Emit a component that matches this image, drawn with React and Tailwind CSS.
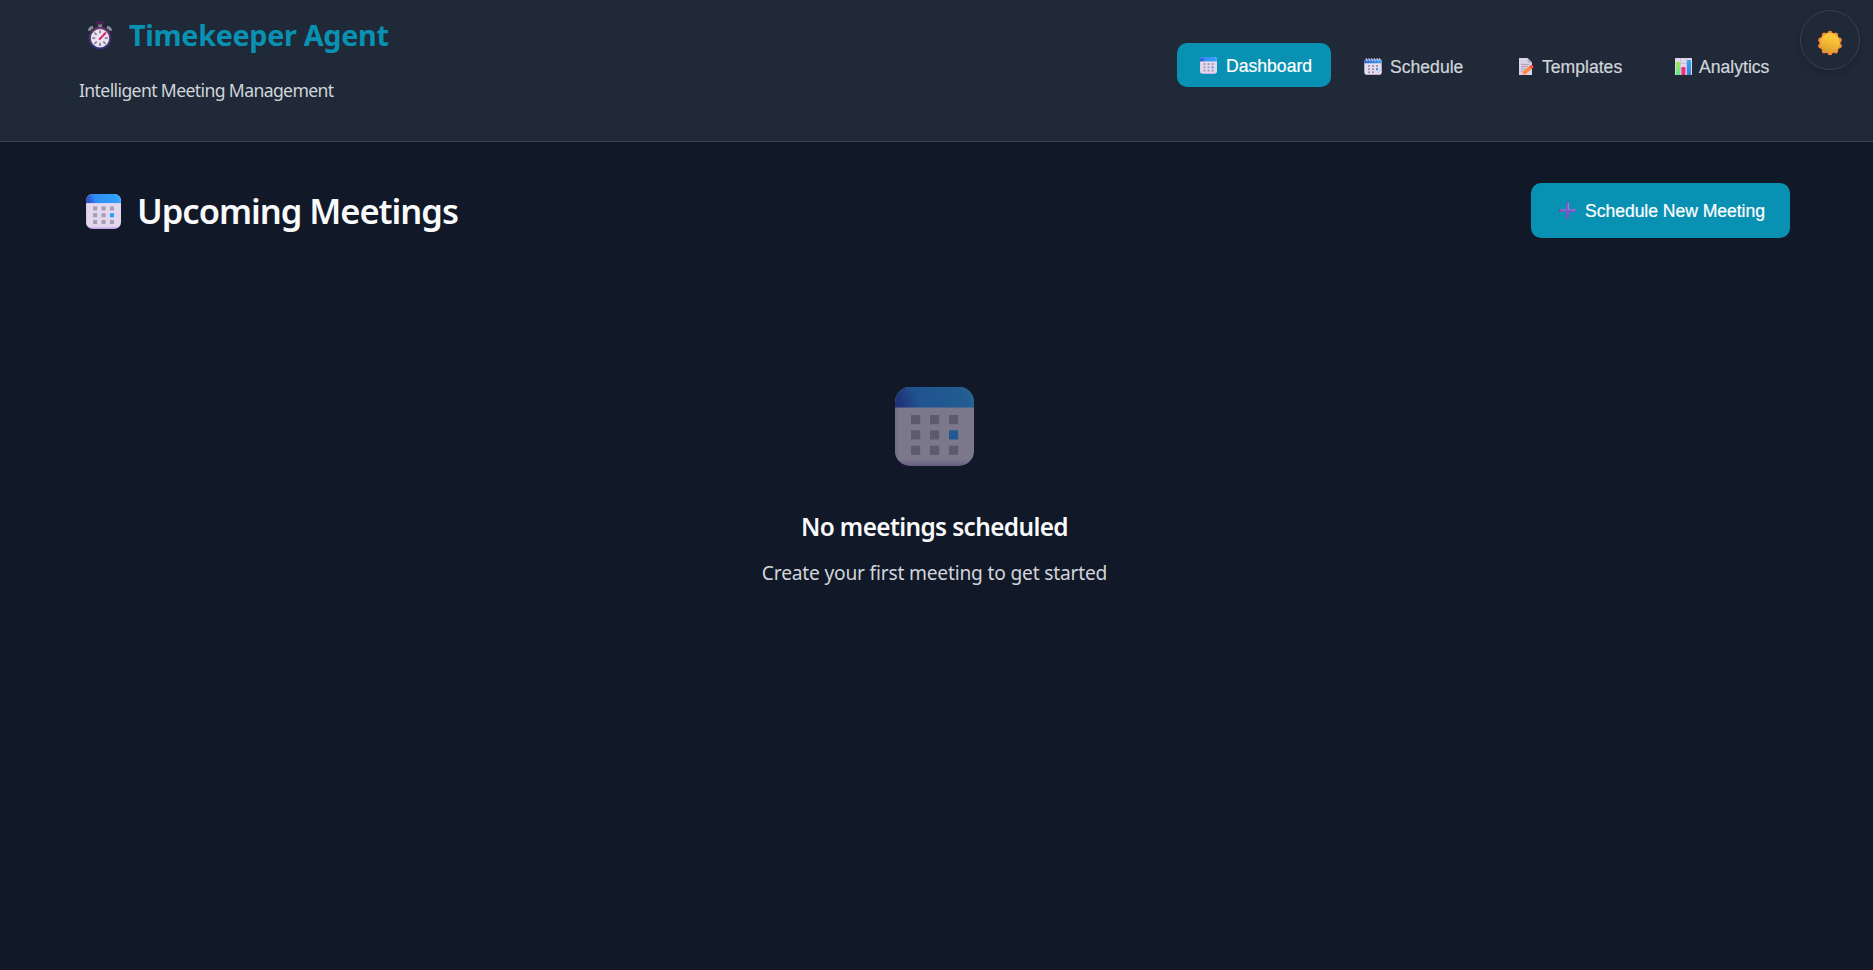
import React from "react";

const DOT_COLS = [16, 35, 54];
const DOT_ROWS = [28, 43.3, 58.7];

function CalendarIcon({ id, className }) {
  return (
    <svg viewBox="0 0 79 79" className={className} aria-hidden="true">
      <defs>
        <linearGradient id={`${id}-top`} x1="0" y1="0.1" x2="1" y2="0">
          <stop offset="0" stopColor="#3050cc" />
          <stop offset="0.24" stopColor="#2f90f5" />
          <stop offset="0.82" stopColor="#2f9ffb" />
          <stop offset="1" stopColor="#3fb8ff" />
        </linearGradient>
        <linearGradient id={`${id}-body`} x1="0" y1="0" x2="0" y2="1">
          <stop offset="0.92" stopColor="#e4d8ee" />
          <stop offset="1" stopColor="#c09ae0" />
        </linearGradient>
        <clipPath id={`${id}-clip`}>
          <rect width="79" height="79" rx="15" />
        </clipPath>
      </defs>
      <g clipPath={`url(#${id}-clip)`}>
        <rect width="79" height="79" fill={`url(#${id}-body)`} />
        <rect width="3" y="20" height="59" fill="#cdbfdb" opacity="0.6" />
        <rect width="79" height="20.5" fill={`url(#${id}-top)`} />
      </g>
      {DOT_ROWS.map((y, r) =>
        DOT_COLS.map((x, c) => (
          <rect key={`${r}-${c}`} x={x} y={y} width="9.2" height="9.2" fill={r === 1 && c === 2 ? "#2f9cf8" : "#a79eb3"} />
        ))
      )}
    </svg>
  );
}

function SpiralCalendarIcon({ className }) {
  return (
    <svg viewBox="0 0 18 17" className={className} aria-hidden="true">
      <defs>
        <linearGradient id="spiral-top" x1="0" x2="1">
          <stop offset="0" stopColor="#2b5fd0" />
          <stop offset="1" stopColor="#3aa2f5" />
        </linearGradient>
      </defs>
      <path d="M0.3 3.5a2.2 2.2 0 0 1 2.2-2.2h13a2.2 2.2 0 0 1 2.2 2.2v9.7l-3.7 3.6H2.5a2.2 2.2 0 0 1-2.2-2.2z" fill="#e6dcf0" />
      <path d="M0.3 5.2V3.5a2.2 2.2 0 0 1 2.2-2.2h13a2.2 2.2 0 0 1 2.2 2.2v1.7z" fill="url(#spiral-top)" />
      <path d="M2 0.2l1.4 3M4.7 0.2l1.4 3M7.4 0.2l1.4 3M10.1 0.2l1.4 3M12.8 0.2l1.4 3M15.2 0.2l1.2 2.6" stroke="#cfc9d9" strokeWidth="1.1" fill="none" />
      <path d="M17.7 12.5l-3.9 4.3h1.7a2.2 2.2 0 0 0 2.2-2.2z" fill="#f7f2fb" />
      <path d="M17.5 12.6q-3.4-0.1-3.6 4" stroke="#bfb3cb" strokeWidth="0.7" fill="none" />
      <g fill="#9a91a6">
        <rect x="4" y="7.2" width="2" height="1.7" /><rect x="8" y="7.2" width="2" height="1.7" /><rect x="12" y="7.2" width="2" height="1.7" />
        <rect x="4" y="10.3" width="2" height="1.7" /><rect x="8" y="10.3" width="2" height="1.7" />
        <rect x="4" y="13.4" width="2" height="1.7" /><rect x="8" y="13.4" width="2" height="1.7" />
      </g>
      <rect x="12" y="10.2" width="2" height="2" fill="#2492f0" />
    </svg>
  );
}

function MemoIcon({ className }) {
  return (
    <svg viewBox="0 0 17 17" className={className} aria-hidden="true">
      <path d="M1 0h8.6l4.4 4.4V17H1z" fill="#ddd3e8" />
      <path d="M9.6 0v3.4a1 1 0 0 0 1 1H14z" fill="#b5a9c2" />
      <path d="M3 6.4h8M3 8.6h7M3 10.8h4.5M3 13h2" stroke="#a095ad" strokeWidth="0.9" />
      <path d="M4.2 16.6l0.8-3.3 7-5.6 2.4 2.6-6.8 5.9z" fill="#ff8a3d" />
      <path d="M11.2 8.3l1.9-1.5c.8-.6 3 1.8 2.2 2.6l-1.9 1.6z" fill="#ff4d4f" />
      <path d="M4.2 16.6l0.5-2 1.6 1.6z" fill="#e9c49a" />
    </svg>
  );
}

function ChartIcon({ className }) {
  return (
    <svg viewBox="0 0 17 17" className={className} aria-hidden="true">
      <defs>
        <linearGradient id="bar-green" x1="0" y1="0" x2="0" y2="1">
          <stop offset="0" stopColor="#a2e357" /><stop offset="1" stopColor="#62e58e" />
        </linearGradient>
        <linearGradient id="bar-blue" x1="0" y1="0" x2="0" y2="1">
          <stop offset="0" stopColor="#2fa8f7" /><stop offset="1" stopColor="#3a7fd6" />
        </linearGradient>
      </defs>
      <rect width="17" height="17" rx="0.6" fill="#e0d8ea" />
      <path d="M5.6 0v17M11.3 0v17M0 5.5h17M0 11h17" stroke="#bdb2c8" strokeWidth="0.6" />
      <path d="M1 17V4.8a.8.8 0 0 1 .8-.8h2.4a.8.8 0 0 1 .8.8V17z" fill="url(#bar-green)" />
      <path d="M6.4 17V9.8a.8.8 0 0 1 .8-.8h2.4a.8.8 0 0 1 .8.8V17z" fill="#e8327c" />
      <path d="M12 17V2.8a.8.8 0 0 1 .8-.8h2.4a.8.8 0 0 1 .8.8V17z" fill="url(#bar-blue)" />
    </svg>
  );
}

const TICKS = [0, 45, 90, 135, 180, 225, 270, 315];

function StopwatchIcon({ className }) {
  return (
    <svg viewBox="0 0 24 30" className={className} aria-hidden="true">
      <defs>
        <linearGradient id="watch-ring" x1="0" y1="0" x2="0" y2="1">
          <stop offset="0" stopColor="#6a3a72" />
          <stop offset="0.5" stopColor="#4a2f66" />
          <stop offset="1" stopColor="#2f3278" />
        </linearGradient>
      </defs>
      <path d="M1.4 10.8C1.4 8.8 3 7.3 5 7.3M22.6 10.8C22.6 8.8 21 7.3 19 7.3" stroke="#918d99" strokeWidth="2.8" fill="none" />
      <rect x="10.2" y="4" width="3.8" height="3.4" fill="#85818f" />
      <rect x="7.9" y="1" width="8.4" height="3.6" rx="0.6" fill="#46204f" />
      <circle cx="12" cy="18.2" r="11.3" fill="url(#watch-ring)" />
      <circle cx="12" cy="18.2" r="9.2" fill="#eae2f1" />
      {TICKS.map((a) => (
        <rect key={a} x="11.1" y="10.2" width="1.8" height="3.4" rx="0.8" fill="#8b8494" transform={`rotate(${a} 12 18.2)`} />
      ))}
      <path d="M11.7 19l5.8-5.8" stroke="#e31b68" strokeWidth="1.8" strokeLinecap="round" />
    </svg>
  );
}

function PlusIcon({ className }) {
  return (
    <svg viewBox="0 0 17 17" className={className} aria-hidden="true">
      <defs>
        <linearGradient id="plus-h" x1="0" y1="0" x2="0" y2="1">
          <stop offset="0" stopColor="#8f74bd" /><stop offset="1" stopColor="#7450cf" />
        </linearGradient>
      </defs>
      <rect x="0" y="7.1" width="17" height="2.9" rx="0.8" fill="url(#plus-h)" />
      <rect x="7.1" y="0" width="3" height="17" rx="0.8" fill="#7d57c8" />
      <rect x="0" y="7.4" width="1.2" height="2.2" fill="#5a4a7a" />
      <rect x="8.8" y="1" width="1" height="7" fill="#a68bd4" />
    </svg>
  );
}

const PETALS = [0, 36, 72, 108, 144, 180, 216, 252, 288, 324];

function SunIcon({ className }) {
  return (
    <svg viewBox="0 0 26 26" className={className} aria-hidden="true">
      <defs>
        <linearGradient id="sun-core" x1="0.7" y1="0" x2="0.3" y2="1">
          <stop offset="0" stopColor="#ffd038" />
          <stop offset="0.5" stopColor="#f4b935" />
          <stop offset="1" stopColor="#d59a2c" />
        </linearGradient>
      </defs>
      {PETALS.map((a) => (
        <circle key={a} cx="13" cy="3.1" r="2.4" fill="#f58a35" transform={`rotate(${a} 13 13)`} />
      ))}
      <circle cx="13" cy="13" r="10.6" fill="#f58a35" />
      <circle cx="13" cy="13" r="9.9" fill="url(#sun-core)" />
    </svg>
  );
}

function NavItem({ active, icon, label, className }) {
  return (
    <button
      className={`flex h-11 items-center rounded-[10px] text-left text-[17.6px] leading-5 [-webkit-text-stroke:0.2px] ${
        active ? "-mt-0.5 bg-[#0891b2] text-white" : "text-[#d1d5db]"
      } ${className}`}
    >
      {icon}
      <span className="whitespace-nowrap pt-0.5">{label}</span>
    </button>
  );
}

export default function App() {
  return (
    <div className="h-[970px] w-full overflow-hidden bg-[#111827] font-['Noto_Sans','Open_Sans',sans-serif] text-[#f9fafb]">
      <header className="flex h-[142px] items-start justify-between border-b border-[#374151] bg-[#1f2937] pl-[79px] pr-[82px]">
        <div className="pt-[15px]">
          <h1 className="flex h-10 items-center pl-[9px] text-[28.8px] font-bold leading-10 text-[#0891b2]">
            <StopwatchIcon className="mr-[17px] h-[30px] w-6 shrink-0" />
            <span className="whitespace-nowrap tracking-[-0.34px]">Timekeeper Agent</span>
          </h1>
          <p className="mt-[21px] whitespace-nowrap text-[17.6px] leading-7 tracking-[-0.62px] text-[#d1d5db]">
            Intelligent Meeting Management
          </p>
        </div>
        <nav className="flex items-center gap-[10px] pt-[44px] font-['Liberation_Sans',Arial,sans-serif]">
          <NavItem active label="Dashboard" className="w-[154px] pl-[23px]" icon={<CalendarIcon id="nav" className="mr-[9px] size-[17px] shrink-0" />} />
          <NavItem label="Schedule" className="w-[144px] pl-[23px]" icon={<SpiralCalendarIcon className="mr-2 h-[17px] w-[18px] shrink-0" />} />
          <NavItem label="Templates" className="w-[148px] pl-[23px]" icon={<MemoIcon className="mr-[7px] size-[17px] shrink-0" />} />
          <NavItem label="Analytics" className="w-[138px] pl-[22px]" icon={<ChartIcon className="mr-[7px] size-[17px] shrink-0" />} />
        </nav>
      </header>

      <button className="absolute right-[13px] top-[10px] flex size-[60px] items-center justify-center rounded-full border border-[#374151] bg-[#1f2937] pr-px pt-[5px] shadow-[0_4px_6px_rgba(0,0,0,0.1)]">
        <SunIcon className="size-[26px]" />
      </button>

      <main className="pl-[86px] pr-[83px] pt-[41px]">
        <div className="flex h-[55px] items-center justify-between">
          <h2 className="flex items-center text-[34.5px] font-semibold leading-[48px]">
            <CalendarIcon id="heading" className="mr-4 mt-0.5 size-[35px] shrink-0" />
            <span className="whitespace-nowrap tracking-[-1.02px]">Upcoming Meetings</span>
          </h2>
          <button className="flex h-[55px] w-[259px] items-center rounded-[10px] bg-[#0891b2] pl-7 font-['Liberation_Sans',Arial,sans-serif] text-[17.6px] leading-5 text-white [-webkit-text-stroke:0.2px]">
            <PlusIcon className="mr-[9px] size-[17px] shrink-0" />
            <span className="whitespace-nowrap tracking-[-0.05px]">Schedule New Meeting</span>
          </button>
        </div>

        <section className="flex flex-col items-center pr-[7px] pt-[149px] text-center">
          <CalendarIcon id="empty" className="size-[79px] opacity-50" />
          <h3 className="mt-[43px] whitespace-nowrap text-[24.4px] font-semibold leading-9 tracking-[-0.62px]">No meetings scheduled</h3>
          <p className="mt-3 whitespace-nowrap text-[19.2px] leading-8 tracking-[-0.2px] text-[#d1d5db]">Create your first meeting to get started</p>
        </section>
      </main>
    </div>
  );
}
